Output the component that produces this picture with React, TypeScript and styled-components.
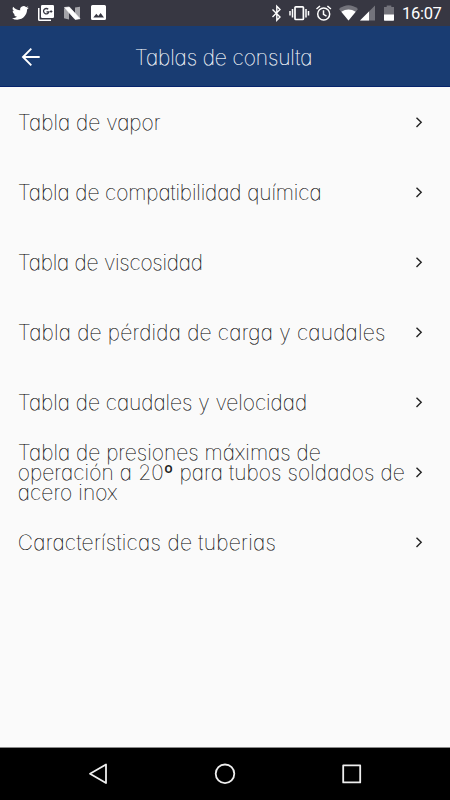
import React from "react";
import styled, { createGlobalStyle } from "styled-components";

const GlobalStyle = createGlobalStyle`
  * { box-sizing: border-box; }
  body { margin: 0; background: #fafafa; }
`;

const Screen = styled.div`
  display: flex;
  flex-direction: column;
  width: 450px;
  height: 800px;
  background: #fafafa;
  font-family: Inter, sans-serif;
  font-weight: 100;
  font-feature-settings: "cv11";
  overflow: hidden;
`;

const StatusBar = styled.div`
  display: flex;
  justify-content: space-between;
  height: 26px;
  flex: none;
  background: #373742;
`;

const Clock = styled.time`
  width: 48px;
  padding-top: 1px;
  font: 400 16.5px/26px Roboto, sans-serif;
  letter-spacing: -0.3px;
  color: #fff;
`;

const Tray = styled.div`
  display: flex;
`;

const Header = styled.header`
  display: grid;
  grid-template-columns: 62px 1fr 62px;
  align-items: center;
  height: 61px;
  flex: none;
  background: #193c72;
  border-bottom: 1px solid #06246c;
`;

const BackButton = styled.button`
  display: flex;
  width: 62px;
  height: 60px;
  padding: 0;
  border: 0;
  background: none;
`;

const Title = styled.h1`
  margin: 0;
  padding: 3px 3px 0 0;
  text-align: center;
  font-size: 21px;
  line-height: 24px;
  font-weight: 100;
  letter-spacing: -0.1px;
  color: #fff;
  -webkit-text-stroke: 0.2px #fff;
  white-space: nowrap;
`;

const List = styled.ul`
  flex: 1;
  margin: 0;
  padding: 0;
  list-style: none;
`;

const Row = styled.li`
  display: flex;
  align-items: center;
  justify-content: space-between;
  height: 70px;
  padding: 2px 22px 0 17.7px;
`;

const Label = styled.div`
  font-size: 21px;
  line-height: 20px;
  color: #000;
  -webkit-text-stroke: 0.15px #000;
`;

const Line = styled.span<{ $tracking: number }>`
  display: block;
  letter-spacing: ${(p) => p.$tracking}px;
  white-space: nowrap;
`;

const Ordinal = styled.span`
  font-family: Roboto, sans-serif;
  font-weight: 400;
  font-size: 21px;
  line-height: 1px;
  color: #222;
  -webkit-text-stroke: 0;
`;

const Chevron = styled.svg`
  flex: none;
  width: 18px;
  height: 18px;
  margin-top: -2px;
`;

const NavBar = styled.nav`
  display: flex;
  height: 53px;
  flex: none;
  background: #000;
  border-top: 1px solid #8a8a8a;
`;

interface TextLine {
  text: React.ReactNode;
  tracking: number;
}

const rows: TextLine[][] = [
  [{ text: "Tabla de vapor", tracking: 0 }],
  [{ text: "Tabla de compatibilidad química", tracking: -0.12 }],
  [{ text: "Tabla de viscosidad", tracking: -0.25 }],
  [{ text: "Tabla de pérdida de carga y caudales", tracking: 0.19 }],
  [{ text: "Tabla de caudales y velocidad", tracking: -0.05 }],
  [
    { text: "Tabla de presiones máximas de", tracking: 0 },
    { text: <>operación a 20<Ordinal>º</Ordinal> para tubos soldados de</>, tracking: 0.1 },
    { text: "acero inox", tracking: 0.1 },
  ],
  [{ text: "Características de tuberias", tracking: 0.28 }],
];

function NotificationIcons() {
  return (
    <svg width="120" height="26" viewBox="0 0 120 26" fill="#fff">
      <g transform="translate(12.200 4.200) scale(.7)">
        <path d="M23.6 4.9c-.9.4-1.8.6-2.8.8 1-.6 1.8-1.6 2.2-2.7-1 .6-2 1-3.1 1.2A4.9 4.9 0 0 0 11.5 8.700C7.400 8.500 3.800 6.500 1.400 3.600a4.900 4.900 0 0 0 1.500 6.500c-.8 0-1.600-.2-2.200-.6v.1c0 2.400 1.700 4.400 3.900 4.800-.7.200-1.500.2-2.200.1.600 2 2.400 3.400 4.600 3.400A9.900 9.900 0 0 1-.3 19.900a13.900 13.900 0 0 0 7.500 2.200c9.100 0 14-7.500 14-14v-.6c1-.7 1.800-1.600 2.400-2.600z" />
      </g>
      <path d="M38 8h1.500v11.500H51V21H39.500a1.500 1.500 0 0 1-1.500-1.500z" />
      <rect x="41" y="5" width="13" height="13" rx="1.2" />
      <path d="M48.2 9.300a2.700 2.700 0 1 0 .7 2.500H46.500" fill="none" stroke="#373742" strokeWidth="1.300" />
      <path d="M49.800 11.500h2.600M51.100 10.200v2.600" stroke="#373742" />
      <path d="M64 8l5 3v8.500l-5-1.200zM75 7.500l5-.7V19l-5-3z" opacity=".55" />
      <path d="M64.500 7.500l4.800-.5L80 18.700l-4.800.8z" stroke="#fff" strokeWidth=".7" />
      <path fillRule="evenodd" d="M92.500 5h12a1.500 1.500 0 0 1 1.500 1.500v12a1.500 1.500 0 0 1-1.500 1.500h-12a1.500 1.500 0 0 1-1.500-1.500v-12A1.500 1.500 0 0 1 92.500 5zm.8 12.500h10.700l-3.400-4.500-2.300 3-2-2.300z" />
    </svg>
  );
}

function SystemIcons() {
  return (
    <svg width="132" height="26" viewBox="270 0 132 26" fill="#fff">
      <path d="M272.500 9.500l7.500 7.500-3.200 3.200V6.200L280 9.500l-7.500 7.500" fill="none" stroke="#fff" strokeWidth="1.400" />
      <rect x="295" y="6.800" width="8.400" height="12.700" rx=".8" fill="none" stroke="#fff" strokeWidth="1.700" />
      <path d="M290 11v4.500M292.500 9v8.500M306 9v8.500M308.500 11v4.500" stroke="#fff" strokeWidth="1.500" />
      <g fill="none" stroke="#fff" strokeWidth="1.500">
        <circle cx="323.700" cy="14" r="6" />
        <path d="M323.500 10.300v4l3 1.800M316.500 9l3.500-3M327.400 6l3.500 3" />
      </g>
      <path d="M348.500 20.500L339 9q9.500-7.500 19 0z" opacity=".3" />
      <path d="M348.500 20.500l-7.200-8.800q7.200-4.600 14.400 0z" />
      <path d="M375 5.500v15h-15z" opacity=".3" />
      <path d="M369 11.500v9h-9z" />
      <path d="M384 7h2.700V5.500h4.600V7h2.700v8h-10z" opacity=".3" />
      <path d="M384 14.500h10v5.500a.7.7 0 0 1-.7.7h-8.600a.7.7 0 0 1-.7-.7z" />
    </svg>
  );
}

export default function App() {
  return (
    <Screen>
      <GlobalStyle />
      <StatusBar>
        <NotificationIcons />
        <Tray>
          <SystemIcons />
          <Clock>16:07</Clock>
        </Tray>
      </StatusBar>
      <Header>
        <BackButton aria-label="Atrás">
          <svg width="62" height="60" viewBox="0 26 62 60" fill="none" stroke="#fff" strokeWidth="1.900">
            <path d="M39.700 57H23M31.300 48.700L23 57l8.300 8.300" />
          </svg>
        </BackButton>
        <Title>Tablas de consulta</Title>
      </Header>
      <List>
        {rows.map((lines, i) => (
          <Row key={i}>
            <Label>
              {lines.map((line, j) => (
                <Line key={j} $tracking={line.tracking}>{line.text}</Line>
              ))}
            </Label>
            <Chevron viewBox="0 0 18 18" fill="none" stroke="#222" strokeWidth="1.400">
              <path d="M6.500 4.700L11.200 9.300l-4.700 4.600" />
            </Chevron>
          </Row>
        ))}
      </List>
      <NavBar>
        <svg width="450" height="52" viewBox="0 748 450 52" fill="none" stroke="#eee" strokeWidth="1.800" strokeLinejoin="round">
          <path d="M106 764.500v18.500L90 773.800z" />
          <circle cx="225" cy="773.800" r="9.300" />
          <rect x="343.200" y="765.400" width="17" height="17" />
        </svg>
      </NavBar>
    </Screen>
  );
}
